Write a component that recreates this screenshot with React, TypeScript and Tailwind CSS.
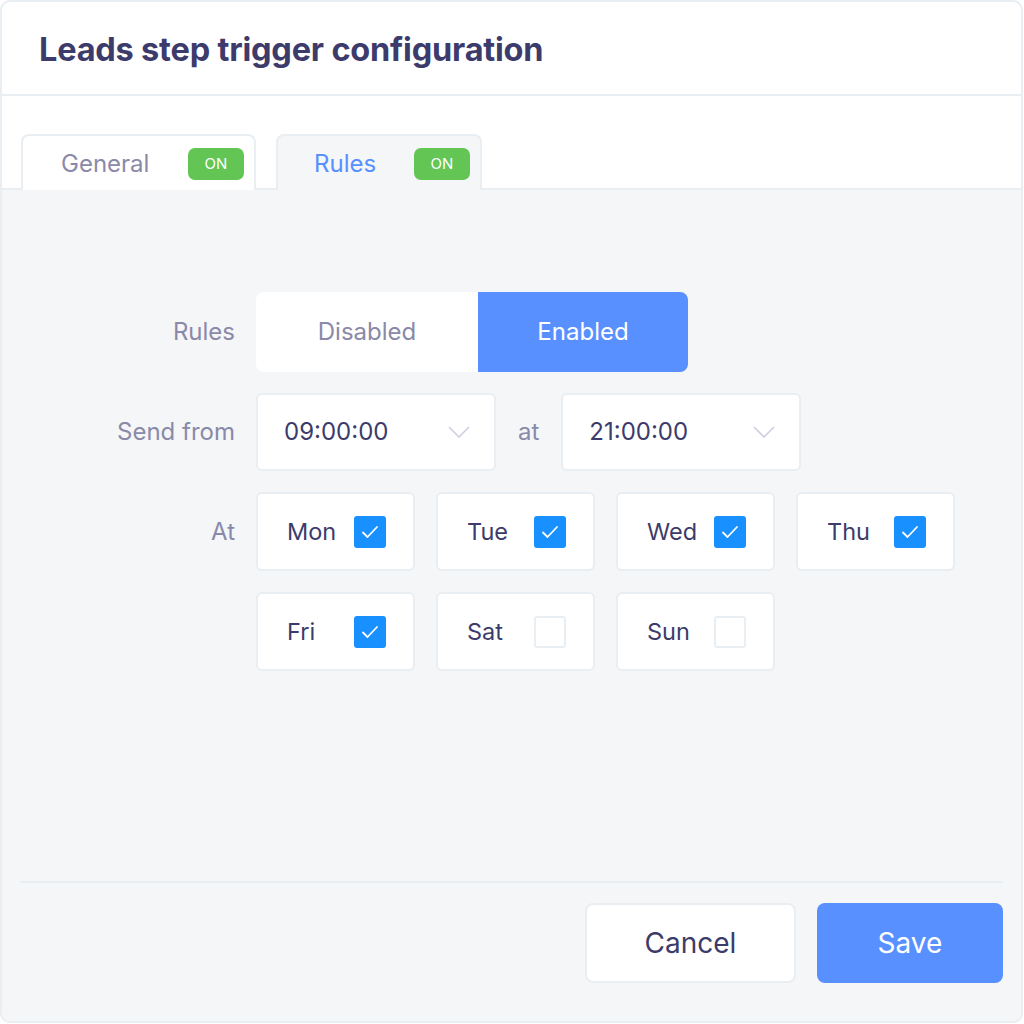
const days = [
  { name: "Mon", on: true },
  { name: "Tue", on: true },
  { name: "Wed", on: true },
  { name: "Thu", on: true },
  { name: "Fri", on: true },
  { name: "Sat", on: false },
  { name: "Sun", on: false },
];

function Chevron() {
  return (
    <svg width="22" height="12" viewBox="0 0 22 12" fill="none">
      <path d="M1 1l10 10L21 1" stroke="#cfcee0" strokeWidth="1.6" />
    </svg>
  );
}

function OnBadge() {
  return (
    <span className="inline-flex items-center justify-center w-[56px] h-[32px] rounded-[7px] bg-[#62c554] text-white text-[15px]">
      ON
    </span>
  );
}

function TimeSelect({ value }: { value: string }) {
  return (
    <div className="w-[240px] h-[78px] bg-white border-2 border-[#e8eef2] rounded-[6px] flex items-center justify-between pl-[26px] pr-[24px]">
      <span className="text-[24px] text-[#3c3b6b]">{value}</span>
      <Chevron />
    </div>
  );
}

function DayBox({ name, on }: { name: string; on: boolean }) {
  return (
    <div className="w-[159px] h-[79px] bg-white border-2 border-[#e8eef2] rounded-[6px] flex items-center pl-[29px]">
      <span className="w-[67px] text-[23.5px] text-[#3c3b6b]">{name}</span>
      {on ? (
        <span className="w-[32px] h-[32px] rounded-[3px] bg-[#1890ff] flex items-center justify-center">
          <svg width="18" height="14" viewBox="0 0 18 14" fill="none">
            <path d="M2 7.5l4.5 4.5L16 2" stroke="white" strokeWidth="1.8" strokeLinecap="round" strokeLinejoin="round" />
          </svg>
        </span>
      ) : (
        <span className="w-[32px] h-[32px] rounded-[3px] bg-white border-2 border-[#e8eef2]" />
      )}
    </div>
  );
}

export default function App() {
  return (
    <div className="w-[1024px] h-[1024px] bg-white" style={{ fontFamily: "Inter, 'Noto Sans', sans-serif" }}>
      <div className="w-[1023px] h-[1023px] border-2 border-[#e8eef2] rounded-[10px] overflow-hidden flex flex-col">
        <div className="h-[94px] border-b-2 border-[#e8eef2] flex items-center px-[37px] pt-[4px]">
          <h1 className="text-[32.5px] font-bold text-[#3c3b6b] tracking-[-0.2px]">Leads step trigger configuration</h1>
        </div>

        <div className="pt-[38px] px-[19px] flex gap-[20px] border-b-2 border-[#e8eef2]">
          <div className="w-[235px] h-[56px] -mb-[2px] bg-white border-2 border-b-0 border-[#e8eef2] rounded-t-[8px] flex items-center pl-[38px] pr-[10px] pt-[2px] justify-between">
            <span className="text-[24px] text-[#8a89a8]">General</span>
            <OnBadge />
          </div>
          <div className="w-[206px] h-[56px] -mb-[2px] bg-[#f4f6f8] border-2 border-b-0 border-[#e8eef2] rounded-t-[8px] flex items-center pl-[36px] pr-[10px] pt-[2px] justify-between">
            <span className="text-[24px] text-[#5890ff]">Rules</span>
            <OnBadge />
          </div>
        </div>

        <div className="flex-1 bg-[#f4f6f8] flex flex-col">
          <div className="pt-[102px] flex flex-col gap-[21px]">
            <div className="flex items-center gap-[21px]">
              <span className="w-[233px] text-right text-[24px] text-[#8a89a8]">Rules</span>
              <div className="flex h-[80px] rounded-[8px] overflow-hidden">
                <div className="w-[222px] bg-white flex items-center justify-center text-[24px] text-[#8a89a8]">Disabled</div>
                <div className="w-[210px] bg-[#5890ff] flex items-center justify-center text-[24px] text-white">Enabled</div>
              </div>
            </div>

            <div className="flex items-center gap-[21px]">
              <span className="w-[233px] text-right text-[24px] text-[#8a89a8]">Send from</span>
              <TimeSelect value="09:00:00" />
              <span className="text-[24px] text-[#8a89a8] mx-[1px]">at</span>
              <TimeSelect value="21:00:00" />
            </div>

            <div className="flex gap-[21px]">
              <span className="w-[233px] h-[79px] flex items-center justify-end text-[24px] text-[#8a89a8]">At</span>
              <div className="grid grid-cols-[159px_159px_159px_159px] gap-x-[21px] gap-y-[21px]">
                {days.map((d) => (
                  <DayBox key={d.name} name={d.name} on={d.on} />
                ))}
              </div>
            </div>
          </div>

          <div className="flex-1" />

          <div className="mx-[18px] border-t-2 border-[#e8eef2] pt-[20px] pb-[38px] flex justify-end gap-[21px]">
            <button className="w-[211px] h-[80px] bg-white border-2 border-[#e8eef2] rounded-[8px] text-[28px] text-[#3c3b6b]">Cancel</button>
            <button className="w-[186px] h-[80px] bg-[#5890ff] rounded-[8px] text-[28px] text-white">Save</button>
          </div>
        </div>
      </div>
    </div>
  );
}
